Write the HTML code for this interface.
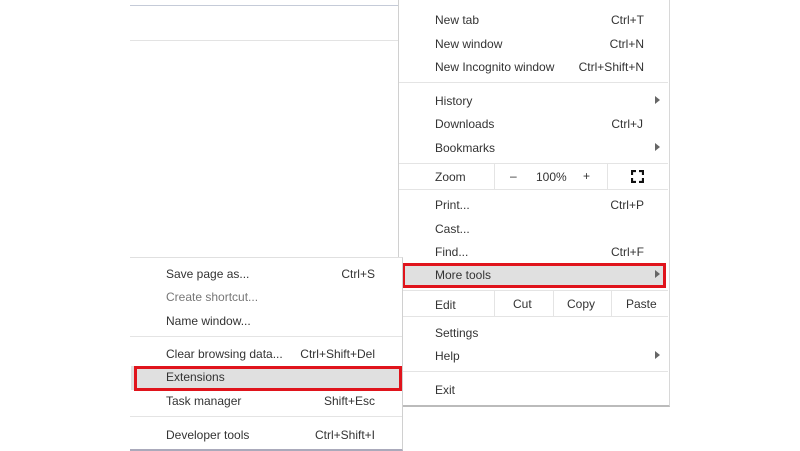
<!DOCTYPE html>
<html><head><style>
body{margin:0;width:800px;height:450px;background:#fff;position:relative;overflow:hidden;font-family:"Liberation Sans",sans-serif;font-size:12px;color:#333}
.a{position:absolute;white-space:nowrap}
.r{position:absolute;white-space:nowrap;text-align:right}
.hl{position:absolute;background:#e0e0e0}
.sep{position:absolute;height:1px;background:#e4e4e4}
.vs{position:absolute;width:1px;background:#e4e4e4}
.arr{position:absolute;width:0;height:0;border-top:4px solid transparent;border-bottom:4px solid transparent;border-left:5px solid #666}
.box{position:absolute;border:3px solid #e0141c;box-sizing:border-box}
.t{margin-top:1px}
</style></head><body>
<div class="a" style="left:130px;top:5px;width:269px;height:1px;background:#c5cbd8"></div>
<div class="a" style="left:130px;top:40px;width:269px;height:1px;background:#e3e3e3"></div>

<div class="a" style="left:398px;top:0;width:270px;height:405px;background:#fff;border-left:1px solid #d0d0d0;border-right:1px solid #d8d8d8;border-bottom:2px solid #bbb"></div>
<div class="a" style="left:435px;top:13px">New tab</div><div class="r" style="right:156px;top:13px">Ctrl+T</div>
<div class="a" style="left:435px;top:37px">New window</div><div class="r" style="right:156px;top:37px">Ctrl+N</div>
<div class="a" style="left:435px;top:60px">New Incognito window</div><div class="r" style="right:156px;top:60px">Ctrl+Shift+N</div>
<div class="sep" style="left:399px;top:82px;width:269px"></div>
<div class="a" style="left:435px;top:94px">History</div><div class="arr" style="left:655px;top:96px"></div>
<div class="a" style="left:435px;top:117px">Downloads</div><div class="r" style="right:157px;top:117px">Ctrl+J</div>
<div class="a" style="left:435px;top:141px">Bookmarks</div><div class="arr" style="left:655px;top:143px"></div>
<div class="sep" style="left:399px;top:163px;width:269px"></div>
<div class="a" style="left:435px;top:170px">Zoom</div>
<div class="vs" style="left:494px;top:163px;height:26px"></div>
<div class="a" style="left:510px;top:169px">–</div>
<div class="a" style="left:536px;top:170px">100%</div>
<div class="a" style="left:583px;top:169px">+</div>
<div class="vs" style="left:607px;top:163px;height:26px"></div>
<svg class="a" style="left:631px;top:170px" width="13" height="13" viewBox="0 0 13 13" fill="none" stroke="#111" stroke-width="2.2"><path d="M1 5V1h4M8 1h4v4M12 8v4H8M5 12H1V8"/></svg>
<div class="sep" style="left:399px;top:189px;width:269px"></div>
<div class="a" style="left:435px;top:198px">Print...</div><div class="r" style="right:156px;top:198px">Ctrl+P</div>
<div class="a" style="left:435px;top:222px">Cast...</div>
<div class="a" style="left:435px;top:245px">Find...</div><div class="r" style="right:156px;top:245px">Ctrl+F</div>
<div class="hl" style="left:399px;top:263px;width:267px;height:24px"></div>
<div class="a" style="left:435px;top:268px">More tools</div><div class="arr" style="left:655px;top:270px"></div>
<div class="box" style="left:402px;top:263px;width:264px;height:25px"></div>
<div class="sep" style="left:399px;top:290px;width:269px"></div>
<div class="a" style="left:435px;top:298px">Edit</div>
<div class="vs" style="left:494px;top:291px;height:25px"></div>
<div class="a" style="left:513px;top:297px">Cut</div>
<div class="vs" style="left:553px;top:291px;height:25px"></div>
<div class="a" style="left:567px;top:297px">Copy</div>
<div class="vs" style="left:611px;top:291px;height:25px"></div>
<div class="a" style="left:626px;top:297px">Paste</div>
<div class="sep" style="left:399px;top:316px;width:269px"></div>
<div class="a" style="left:435px;top:326px">Settings</div>
<div class="a" style="left:435px;top:349px">Help</div><div class="arr" style="left:655px;top:351px"></div>
<div class="sep" style="left:399px;top:371px;width:269px"></div>
<div class="a" style="left:435px;top:383px">Exit</div>

<div class="a" style="left:130px;top:257px;width:272px;height:191px;background:#fff;border-top:1px solid #e0e0e0;border-right:1px solid #d0d0d0;border-bottom:2px solid #aab"></div>
<div class="a" style="left:166px;top:267px">Save page as...</div><div class="r" style="right:425px;top:267px">Ctrl+S</div>
<div class="a" style="left:166px;top:290px;color:#777">Create shortcut...</div>
<div class="a" style="left:166px;top:314px">Name window...</div>
<div class="sep" style="left:130px;top:336px;width:272px"></div>
<div class="a" style="left:166px;top:347px">Clear browsing data...</div><div class="r" style="right:425px;top:347px">Ctrl+Shift+Del</div>
<div class="hl" style="left:131px;top:366px;width:270px;height:24px"></div>
<div class="a" style="left:166px;top:370px">Extensions</div>
<div class="box" style="left:134px;top:366px;width:268px;height:25px"></div>
<div class="a" style="left:166px;top:394px">Task manager</div><div class="r" style="right:425px;top:394px">Shift+Esc</div>
<div class="sep" style="left:130px;top:416px;width:272px"></div>
<div class="a" style="left:166px;top:428px">Developer tools</div><div class="r" style="right:425px;top:428px">Ctrl+Shift+I</div>
</body></html>
